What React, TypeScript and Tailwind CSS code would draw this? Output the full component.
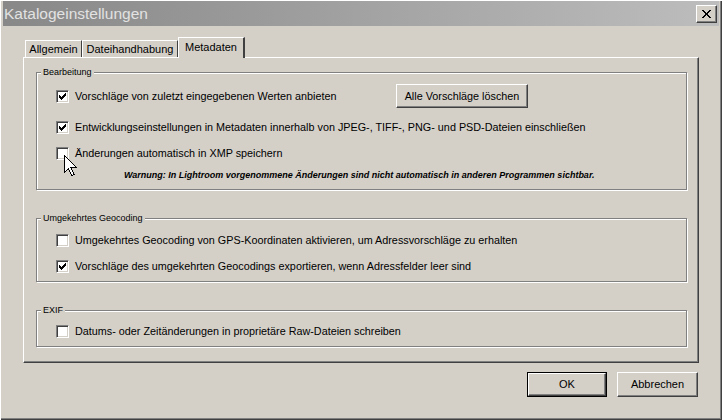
import type { ReactNode } from "react";

const CHECK_PIXELS: [number, number][] = [
  [6, 0], [5, 1], [6, 1], [0, 2], [4, 2], [5, 2], [6, 2],
  [0, 3], [1, 3], [3, 3], [4, 3], [5, 3],
  [0, 4], [1, 4], [2, 4], [3, 4], [4, 4],
  [1, 5], [2, 5], [3, 5], [2, 6],
];

function Checkbox({ checked }: { checked?: boolean }) {
  return (
    <span className="w-[13px] h-[13px] shrink-0 flex items-center justify-center bg-white border border-t-[#808080] border-l-[#808080] border-r-white border-b-white shadow-[inset_1px_1px_0_#404040,inset_-1px_-1px_0_#d4d0c8]">
      {checked && (
        <svg width="7" height="7" viewBox="0 0 7 7" shapeRendering="crispEdges">
          {CHECK_PIXELS.map(([x, y]) => (
            <rect key={`${x}-${y}`} x={x} y={y} width="1" height="1" fill="#000" />
          ))}
        </svg>
      )}
    </span>
  );
}

function Row({ checked, children, className = "" }: { checked?: boolean; children: ReactNode; className?: string }) {
  return (
    <div className={`flex items-center gap-[6px] pl-[19px] ${className}`}>
      <Checkbox checked={checked} />
      <span className="whitespace-nowrap">{children}</span>
    </div>
  );
}

function Group({ label, className = "", children }: { label: string; className?: string; children: ReactNode }) {
  return (
    <div className={`relative w-[651px] border border-[#808080] shadow-[inset_1px_1px_0_#fff,1px_1px_0_#fff] ${className}`}>
      <span className="absolute left-[4px] -top-[7px] px-[2px] bg-[#d4d0c8] text-[9px] leading-[12px] whitespace-nowrap">
        {label}
      </span>
      {children}
    </div>
  );
}

function Button({ children, className = "", primary }: { children: ReactNode; className?: string; primary?: boolean }) {
  const bevel = (
    <div className="w-full h-full flex items-center justify-center border border-t-white border-l-white border-r-[#404040] border-b-[#404040] shadow-[inset_-1px_-1px_0_#808080]">
      {children}
    </div>
  );
  return primary ? (
    <div className={`border border-black bg-[#d4d0c8] ${className}`}>{bevel}</div>
  ) : (
    <div className={`bg-[#d4d0c8] ${className}`}>{bevel}</div>
  );
}

function Tab({ label, active, className = "" }: { label: string; active?: boolean; className?: string }) {
  return active ? (
    <div className={`relative z-10 h-[21px] -mb-[1px] flex items-center justify-center bg-[#d4d0c8] border-t border-l border-t-white border-l-white border-r-2 border-r-[#404040] pb-[2px] ${className}`}>
      {label}
    </div>
  ) : (
    <div className={`h-[17px] flex items-center justify-center border-t border-l border-t-white border-l-white border-r border-r-[#404040] ${className}`}>
      {label}
    </div>
  );
}

function Cursor() {
  return (
    <svg className="absolute left-[64px] top-[155px]" width="13" height="21" viewBox="0 0 13 21" shapeRendering="crispEdges">
      <path d="M0.5 0.5 L0.5 17.5 L4.5 13.5 L7.5 20.5 L10 19.5 L7 12.5 L12.5 12.5 Z" fill="#fff" stroke="#000" strokeWidth="1" />
    </svg>
  );
}

export default function App() {
  return (
    <div className="relative w-[722px] h-[420px] overflow-hidden bg-[#d4d0c8] text-[10.8px] text-black font-['Liberation_Sans',Arial,sans-serif] shadow-[inset_1px_1px_0_#fff,inset_-1px_-1px_0_#404040,inset_-2px_-2px_0_#808080]">
      {/* title bar */}
      <div className="mt-[1px] mx-[3px] h-[25px] flex items-center justify-between pl-[1px] pr-[2px] bg-gradient-to-r from-[#888888] to-[#bdbdbd]">
        <span className="text-[15.5px] text-[#e2e2e2] leading-none">Katalogeinstellungen</span>
        <div className="w-[21px] h-[18px] flex items-center justify-center bg-[#d4d0c8] border border-t-white border-l-white border-r-[#404040] border-b-[#404040] shadow-[inset_-1px_-1px_0_#808080]">
          <svg width="9" height="8" viewBox="0 0 9 8" shapeRendering="crispEdges">
            <path d="M0 0h2l2.5 3 2.5-3h2l-3.5 4 3.5 4h-2l-2.5-3-2.5 3h-2l3.5-4z" fill="#000" />
          </svg>
        </div>
      </div>

      <div className="px-[23px] mt-[11px]">
        {/* tabs */}
        <div className="flex items-end h-[20px] pl-[2px] text-[11px]">
          <Tab label="Allgemein" className="w-[57px]" />
          <Tab label="Dateihandhabung" className="w-[96px]" />
          <Tab label="Metadaten" active className="w-[67px]" />
        </div>

        {/* tab panel */}
        <div className="h-[306px] border border-t-white border-l-white border-r-[#404040] border-b-[#404040] shadow-[inset_-1px_-1px_0_#808080] pl-[12px] pt-[14px]">
          <Group label="Bearbeitung" className="h-[118px] pt-[11px]">
            <div className="flex items-center h-[24px]">
              <Row checked className="w-[359px]">Vorschläge von zuletzt eingegebenen Werten anbieten</Row>
              <Button className="w-[132px] h-[24px]">Alle Vorschläge löschen</Button>
            </div>
            <Row checked className="h-[24px] mt-[7px]">
              Entwicklungseinstellungen in Metadaten innerhalb von JPEG-, TIFF-, PNG- und PSD-Dateien einschließen
            </Row>
            <Row className="h-[24px] mt-[2px]">Änderungen automatisch in XMP speichern</Row>
            <div className="ml-[87px] mt-[4px] h-[14px] flex items-center italic font-bold text-[9px] whitespace-nowrap">
              Warnung: In Lightroom vorgenommene Änderungen sind nicht automatisch in anderen Programmen sichtbar.
            </div>
          </Group>

          <Group label="Umgekehrtes Geocoding" className="h-[64px] mt-[28px] pt-[11px]">
            <Row className="h-[20px]">
              Umgekehrtes Geocoding von GPS-Koordinaten aktivieren, um Adressvorschläge zu erhalten
            </Row>
            <Row checked className="h-[20px] mt-[6px]">
              Vorschläge des umgekehrten Geocodings exportieren, wenn Adressfelder leer sind
            </Row>
          </Group>

          <Group label="EXIF" className="h-[37px] mt-[28px] pt-[10px]">
            <Row className="h-[20px]">Datums- oder Zeitänderungen in proprietäre Raw-Dateien schreiben</Row>
          </Group>
        </div>

        {/* dialog buttons */}
        <div className="flex justify-end gap-[10px] mt-[9px] pr-[1px] text-[11px]">
          <Button primary className="w-[80px] h-[25px]">OK</Button>
          <Button className="w-[81px] h-[25px]">Abbrechen</Button>
        </div>
      </div>

      <Cursor />
    </div>
  );
}
